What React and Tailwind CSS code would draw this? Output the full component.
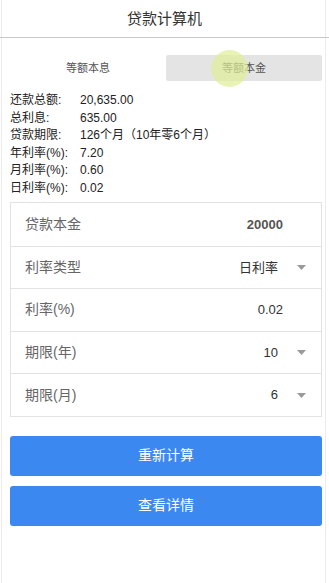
import React from 'react';

const font = { fontFamily: '"Liberation Sans", "Noto Sans CJK SC", sans-serif' };

const summary = [
  ['还款总额:', '20,635.00'],
  ['总利息:', '635.00'],
  ['贷款期限:', '126个月（10年零6个月）'],
  ['年利率(%):', '7.20'],
  ['月利率(%):', '0.60'],
  ['日利率(%):', '0.02'],
];

const rows = [
  { label: '贷款本金', value: '20000', bold: true },
  { label: '利率类型', value: '日利率', select: true },
  { label: '利率(%)', value: '0.02' },
  { label: '期限(年)', value: '10', select: true },
  { label: '期限(月)', value: '6', select: true },
];

const Caret = () => (
  <svg width="9" height="5" viewBox="0 0 9 5" className="ml-[19px] mr-[2px]">
    <path d="M0 0 H9 L4.5 5 Z" fill="#9a9a9a" />
  </svg>
);

export default function App() {
  return (
    <div className="min-h-[583px] w-[329px] bg-white text-[#222]" style={font}>
      <div className="min-h-[583px] w-[325px] border-l border-r border-[#ececec] ml-[1px]">
        <div className="h-[38px] border-b border-[#c8c8c8] flex items-center justify-center text-[15px] text-[#333] -ml-[2px] w-[329px]">
          <span className="mt-[1px]">贷款计算机</span>
        </div>

        <div className="relative mt-[17px] ml-[8px] mr-[3px] flex h-[26px] text-[11px] text-[#555]">
          <div className="flex-1 flex items-center justify-center">等额本息</div>
          <div className="flex-1 flex items-center justify-center bg-[#e4e4e4] rounded-[2px]">等额本金</div>
          <div className="absolute left-[201px] top-[-5px] w-[37px] h-[37px] rounded-full bg-[#e0ee96] opacity-70" />
        </div>

        <div className="mt-[11px] px-[8px] text-[12px] leading-[17.5px]">
          {summary.map(([k, v]) => (
            <div key={k} className="flex">
              <span className="w-[70px]">{k}</span>
              <span>{v}</span>
            </div>
          ))}
        </div>

        <div className="mt-[5px] ml-[8px] mr-[3px] border border-[#e3e3e3]">
          {rows.map((r, i) => (
            <div
              key={r.label}
              className={`flex items-center h-[42.6px] pl-[14px] pr-[13px] ${i > 0 ? 'border-t border-[#e3e3e3]' : ''}`}
            >
              <span className="flex-1 text-[14px] text-[#666]">{r.label}</span>
              <span className={`text-[13px] ${r.bold ? 'font-bold text-[#555]' : 'text-[#333]'} ${r.select ? '' : 'mr-[25px]'}`}>
                {r.value}
              </span>
              {r.select && <Caret />}
            </div>
          ))}
        </div>

        <div className="mt-[19px] ml-[8px] mr-[3px] flex flex-col gap-[10px]">
          <button className="h-[40px] rounded-[3px] bg-[#3a88f0] text-white text-[14px]">重新计算</button>
          <button className="h-[40px] rounded-[3px] bg-[#3a88f0] text-white text-[14px]">查看详情</button>
        </div>
      </div>
    </div>
  );
}
